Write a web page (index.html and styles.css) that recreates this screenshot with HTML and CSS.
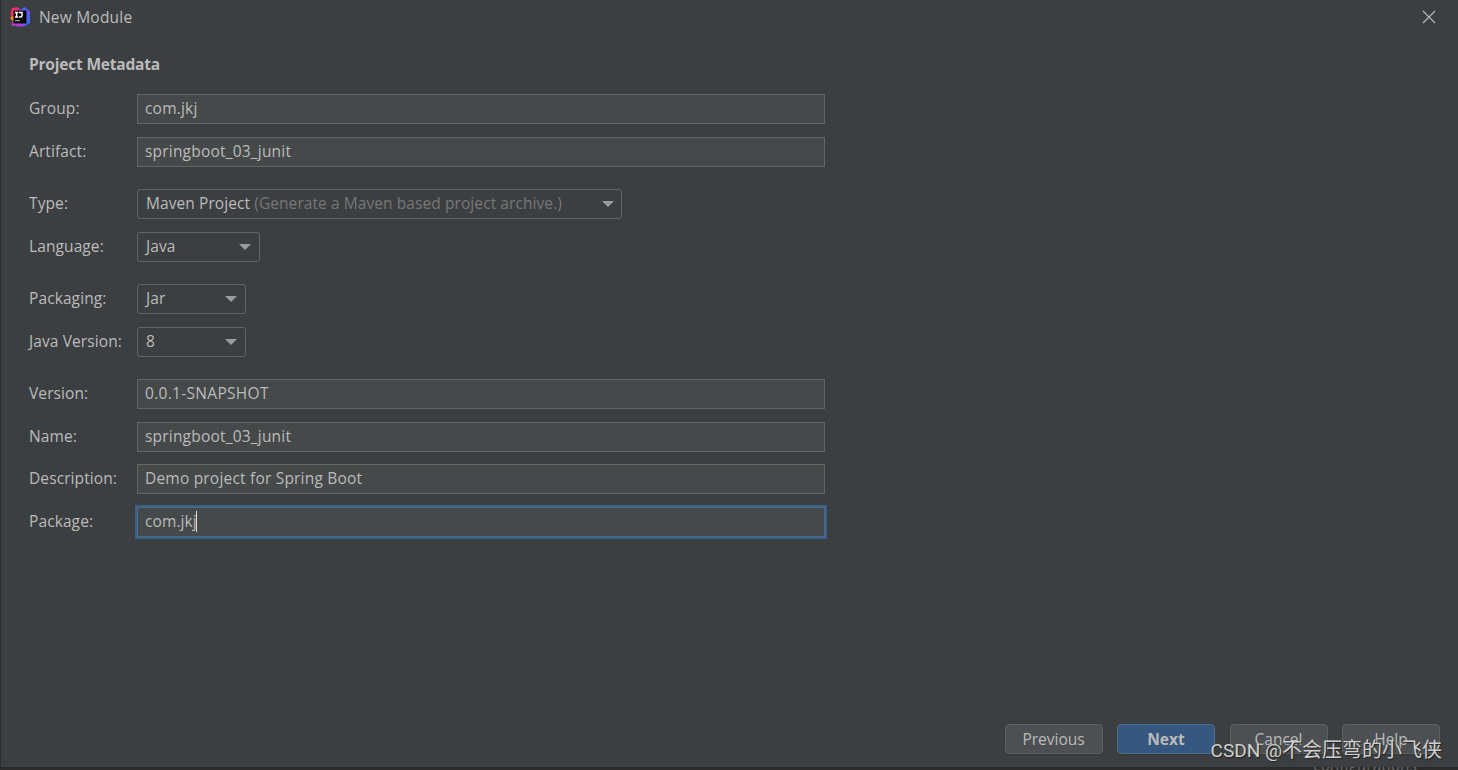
FILE: index.html
```html
<!DOCTYPE html>
<html lang="en">
<head>
  <meta charset="UTF-8">
  <meta name="viewport" content="width=device-width, initial-scale=1.0">
  <title>New Module</title>
  <link rel="stylesheet" href="styles.css">
</head>
<body>
  <div class="dialog">
    <header class="titlebar">
      <svg class="logo" width="22" height="22" viewBox="0 0 22 22">
        <defs>
          <linearGradient id="blue" x1="0" y1="0" x2="1" y2="1">
            <stop offset="0" stop-color="#087cfa"/>
            <stop offset="0.5" stop-color="#6b57ff"/>
            <stop offset="1" stop-color="#2174e0"/>
          </linearGradient>
          <linearGradient id="pink" x1="0" y1="0" x2="1" y2="0">
            <stop offset="0" stop-color="#fe2857"/>
            <stop offset="1" stop-color="#d435a0"/>
          </linearGradient>
        </defs>
        <path fill="url(#blue)" d="M15.500 1L21 5.500V17l-6 3.500-5-2V5z"/>
        <path fill="url(#pink)" d="M2.500 2.500L8 1l5 4-3 9H3L1.500 8z"/>
        <path fill="#fc801d" d="M3 10l3 1v4.500l-3-1L1 12z"/>
        <path fill="#b63bd0" d="M3 15.500l9 2 3 3H8l-1-1-4.500.500z"/>
        <path fill="#08080a" d="M4.500 4.500h13v13h-13z"/>
        <path fill="none" stroke="#fff" stroke-width="1.400" d="M6 6.500h3.200M7.600 6.500v4.500M6 11h3.200M10 6.500h3v3.200q0 1.300-1.300 1.300H10"/>
        <path fill="#999" d="M6 14h5v1.200H6z"/>
      </svg>
      <span class="title">New Module</span>
      <svg class="close" width="14" height="14" viewBox="0 0 14 14">
        <path d="M1 1l12 12M13 1L1 13"/>
      </svg>
    </header>

    <main class="content">
      <h1>Project Metadata</h1>

      <div class="row">
        <label>Group:</label>
        <div class="field">com.jkj</div>
      </div>
      <div class="row">
        <label>Artifact:</label>
        <div class="field">springboot_03_junit</div>
      </div>

      <div class="row group-start">
        <label>Type:</label>
        <div class="select select-type"><span>Maven Project <span class="hint">(Generate a Maven based project archive.)</span></span></div>
      </div>
      <div class="row">
        <label>Language:</label>
        <div class="select select-language"><span>Java</span></div>
      </div>

      <div class="row group-start">
        <label>Packaging:</label>
        <div class="select"><span>Jar</span></div>
      </div>
      <div class="row">
        <label>Java Version:</label>
        <div class="select"><span>8</span></div>
      </div>

      <div class="row group-start">
        <label>Version:</label>
        <div class="field version">0.0.1-SNAPSHOT</div>
      </div>
      <div class="row">
        <label>Name:</label>
        <div class="field">springboot_03_junit</div>
      </div>
      <div class="row">
        <label>Description:</label>
        <div class="field">Demo project for Spring Boot</div>
      </div>
      <div class="row">
        <label>Package:</label>
        <div class="field focused">com.jkj<i class="caret"></i></div>
      </div>
    </main>

    <footer class="buttons">
      <button type="button">Previous</button>
      <button type="button" class="primary">Next</button>
      <button type="button">Cancel</button>
      <button type="button">Help</button>
    </footer>
  </div>
  <div class="behind"><span>configurations</span></div>
  <div class="watermark"><span class="site">CSDN @</span>不会压弯的小飞侠</div>
</body>
</html>
```

FILE: styles.css
```css
* {
  box-sizing: border-box;
}
body {
  margin: 0;
  height: 770px;
  overflow: hidden;
  position: relative;
  background-color: #2b2b2b;
  font-family: "Open Sans", "Noto Sans", sans-serif;
  font-size: 15.5px;
  line-height: 20px;
  color: #bbbbbb;
}
.dialog {
  display: flex;
  flex-direction: column;
  height: 767px;
  background-color: #3c3f41;
  border-left: 1px solid #2b2b2b;
}
.titlebar {
  display: flex;
  align-items: center;
  height: 34px;
  padding: 0 22px 0 8px;
}
.logo {
  margin-right: 8px;
}
.title {
  letter-spacing: 0.2px;
}
.close {
  margin-left: auto;
  fill: none;
  stroke: #b4b5b6;
  stroke-width: 1.2;
}
.content {
  flex: 1;
  padding: 20px 28px 0;
}
h1 {
  margin: 0 0 20px;
  font-size: 15.5px;
  line-height: 20px;
  letter-spacing: -0.2px;
}
.row {
  display: flex;
  align-items: center;
  height: 30px;
  margin-bottom: 12.5px;
}
.group-start {
  margin-top: 22.5px;
}
label {
  width: 108px;
  padding-bottom: 2px;
  letter-spacing: 0.1px;
}
.field {
  width: 688px;
  height: 30px;
  padding: 3px 7px;
  background-color: #45494a;
  border: 1px solid #646464;
  letter-spacing: 0.2px;
}
.version {
  letter-spacing: 0.3px;
}
.focused {
  display: flex;
  border-color: #466d94;
  box-shadow: 0 0 0 2px #3d6185;
  letter-spacing: 0.1px;
}
.caret {
  width: 1px;
  height: 21px;
  margin-left: -1px;
  background-color: #dddddd;
}
.select {
  display: flex;
  align-items: center;
  justify-content: space-between;
  width: 109px;
  height: 30px;
  padding: 0 8px;
  border: 1px solid #646464;
  border-radius: 3px;
  letter-spacing: 0.1px;
}
.select > span {
  padding-bottom: 2px;
}
.select::after {
  content: "";
  border: 6px solid transparent;
  border-top: 6px solid #9a9da0;
  border-bottom: 0;
}
.select-type {
  width: 485px;
  padding-right: 7px;
  letter-spacing: 0.08px;
}
.select-language {
  width: 123px;
}
.hint {
  color: #777777;
}
.buttons {
  display: flex;
  justify-content: flex-end;
  gap: 14.5px;
  padding: 0 18px 13px;
}
button {
  width: 98px;
  height: 30px;
  padding: 0;
  background-color: #4c5052;
  border: 1px solid #5e6060;
  border-radius: 4px;
  box-shadow: 0 1px 1px #36393a;
  color: #bbbbbb;
  font: inherit;
}
.primary {
  background-color: #365880;
  border-color: #4c708c;
  font-weight: bold;
}
.behind {
  height: 3px;
  padding-left: 1313px;
  overflow: hidden;
  color: #666666;
}
.behind span {
  display: block;
  margin-top: -12px;
}
.watermark {
  position: absolute;
  right: 16px;
  bottom: 6px;
  font-family: "Noto Sans CJK SC", sans-serif;
  font-size: 20px;
  line-height: 26px;
  white-space: nowrap;
  color: #d0d0d0;
  text-shadow: 1px 1px 1px #222222;
}
.site {
  font-family: Roboto, sans-serif;
  font-size: 19px;
}
```
